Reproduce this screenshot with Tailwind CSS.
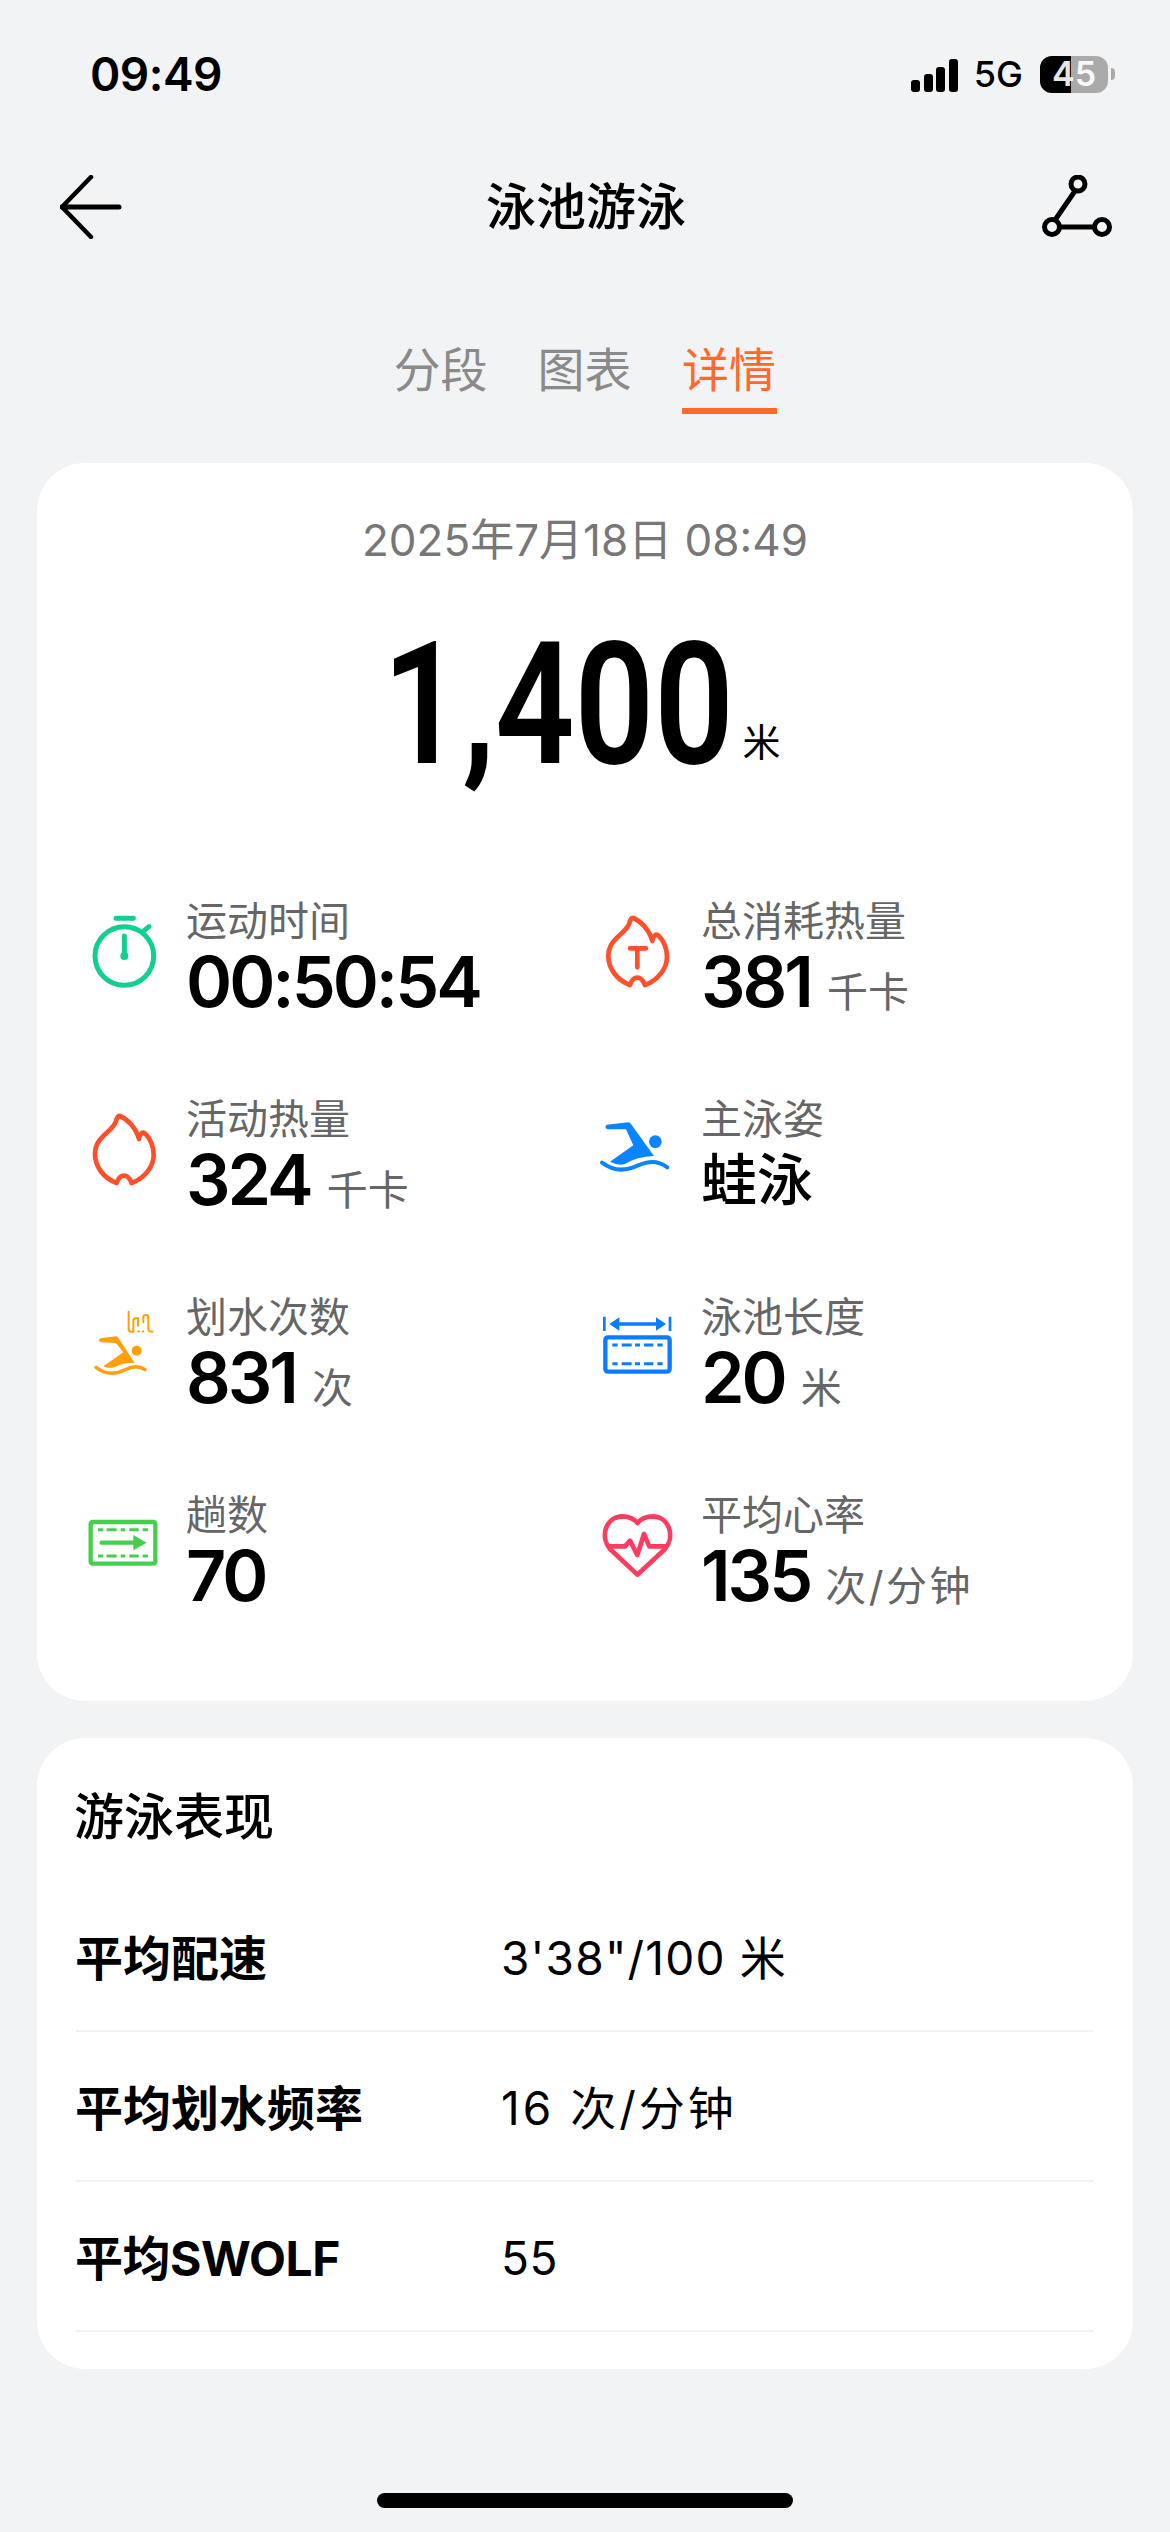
<!DOCTYPE html>
<html lang="zh-CN">
<head>
    <meta charset="UTF-8">
    <meta name="viewport" content="width=device-width, initial-scale=1.0">
    <title>泳池游泳</title>
    <script src="https://cdn.jsdelivr.net/npm/@tailwindcss/browser@4"></script>
</head>
<body class="bg-[#f2f3f5] font-['Inter','Noto_Sans_CJK_SC',sans-serif] text-black">
<div class="w-[1170px] h-[2532px] flex flex-col overflow-hidden">
    <!-- Status bar -->
    <div class="h-[148px] shrink-0 flex items-center justify-between pl-[90px] pr-[55px]">
        <span class="text-[46px] font-semibold leading-none tracking-[-0.5px]">09:49</span>
        <div class="flex items-center">
            <div class="flex items-end gap-[3.5px] h-[33px] mt-[3px]">
                <div class="w-[9px] h-[12px] bg-black rounded-[3px]"></div>
                <div class="w-[9px] h-[18px] bg-black rounded-[3px]"></div>
                <div class="w-[9px] h-[25px] bg-black rounded-[3px]"></div>
                <div class="w-[9px] h-[33px] bg-black rounded-[3px]"></div>
            </div>
            <span class="ml-[16px] text-[36px] font-medium leading-none">5G</span>
            <div class="ml-[17px] relative w-[68px] h-[37px] rounded-[12px] flex bg-[#aaaaaa]">
                <div class="w-[31px] bg-black rounded-l-[12px]"></div>
                <span class="absolute inset-0 flex items-center justify-center text-[34px] font-semibold leading-none text-white/90">45</span>
            </div>
            <div class="ml-[3px] w-[4px] h-[12px] rounded-r-full bg-[#aaaaaa]"></div>
        </div>
    </div>

    <!-- Nav -->
    <div class="h-[118px] shrink-0 flex items-center justify-between pl-[60px] pr-[56px]">
        <svg class="w-[62px] h-[64px]" viewBox="0 0 62 64" fill="none" stroke="black" stroke-width="4.5" stroke-linecap="round" stroke-linejoin="round">
            <path d="M31 2 L2 32 L31 62"/>
            <path d="M2 32 H59" stroke-width="5"/>
        </svg>
        <h1 class="ml-[8px] text-[50px] font-medium leading-none">泳池游泳</h1>
        <svg class="w-[72px] h-[64px]" viewBox="0 0 72 64" fill="none" stroke="black" stroke-width="5">
            <circle cx="36" cy="9" r="7"/>
            <circle cx="10" cy="52" r="7.5"/>
            <circle cx="60" cy="52" r="7.5"/>
            <path d="M33 16 L13 45 M17.5 52 H52.5"/>
        </svg>
    </div>

    <!-- Tabs -->
    <div class="shrink-0 pt-[74px] flex justify-center gap-[50px] text-[47px] leading-[60px] text-[#8a8a8a]">
        <span>分段</span>
        <span>图表</span>
        <div class="flex flex-col items-center">
            <span class="text-[#ff6a2b]">详情</span>
            <div class="mt-[8px] w-[95px] h-[6px] bg-[#ff6a2b]"></div>
        </div>
    </div>

    <!-- Summary card -->
    <div class="mt-[49px] mx-[37px] shrink-0 bg-white rounded-[48px] pt-[47px] pb-[13px]">
        <p class="text-center text-[44px] leading-[60px] text-[#777777]">2025年7月18日 08:49</p>
        <div class="mt-[60px] h-[150px] mb-[116px] flex justify-center items-end gap-[15px]">
            <div class="w-[338px] flex justify-center">
                <span class="font-['Roboto'] font-semibold text-[170px] leading-[150px] scale-x-[0.82] whitespace-nowrap">1,400</span>
            </div>
            <span class="text-[38px] leading-none mb-[19px]">米</span>
        </div>

        <div class="grid grid-cols-[515px_1fr] auto-rows-[198px] pl-[52px]">
            <div class="flex gap-[27px]">
                <svg class="w-[70px] h-[120px] shrink-0 overflow-visible" viewBox="87 48 210 360" fill="none" stroke="#0fd08f" stroke-width="15" stroke-linecap="round">
                    <circle cx="193" cy="228" r="88"/>
                    <path d="M168 115 H220 M193 168 V228 M252 152 L267 140"/>
                    <circle cx="193" cy="228" r="12" fill="#0fd08f" stroke="none"/>
                </svg>
                <div>
                    <p class="text-[41px] leading-[50px] text-[#666666]">运动时间</p>
                    <p class="flex items-baseline text-[70px] leading-[72px] font-semibold tracking-[-3px]">00:50:54</p>
                </div>
            </div>
            <div class="flex gap-[27px]">
                <svg class="w-[70px] h-[120px] shrink-0 overflow-visible" viewBox="72 48 210 360" fill="none" stroke="#ff4f2b" stroke-width="14" stroke-linecap="round" stroke-linejoin="round">
                    <path d="M150 315 C110 300 85 265 85 228 C85 175 135 165 148 130 C151 118 155 113 160 114 C180 122 208 148 217 183 C218 168 228 160 236 167 C250 180 261 205 261 230 C261 265 235 300 195 315 C188 298 178 293 172 293 C163 293 155 300 150 315 Z"/>
                    <path d="M150 205 H198 M172 205 V262"/>
                </svg>
                <div>
                    <p class="text-[41px] leading-[50px] text-[#666666]">总消耗热量</p>
                    <p class="flex items-baseline gap-[16px] text-[70px] leading-[72px] font-semibold tracking-[-3px]">381<span class="text-[41px] font-normal tracking-normal text-[#666666]">千卡</span></p>
                </div>
            </div>

            <div class="flex gap-[27px]">
                <svg class="w-[70px] h-[120px] shrink-0 overflow-visible" viewBox="87 12 210 360" fill="none" stroke="#ff4f2b" stroke-width="14" stroke-linecap="round" stroke-linejoin="round">
                    <path transform="translate(20 -36)" d="M150 315 C110 300 85 265 85 228 C85 175 135 165 148 130 C151 118 155 113 160 114 C180 122 208 148 217 183 C218 168 228 160 236 167 C250 180 261 205 261 230 C261 265 235 300 195 315 C188 298 178 293 172 293 C163 293 155 300 150 315 Z"/>
                </svg>
                <div>
                    <p class="text-[41px] leading-[50px] text-[#666666]">活动热量</p>
                    <p class="flex items-baseline gap-[16px] text-[70px] leading-[72px] font-semibold tracking-[-3px]">324<span class="text-[41px] font-normal tracking-normal text-[#666666]">千卡</span></p>
                </div>
            </div>
            <div class="flex gap-[27px]">
                <svg class="w-[70px] h-[120px] shrink-0 overflow-visible" viewBox="72 12 210 360" fill="#0a84ff">
                    <path d="M80 104 L145 97 Q150 97 153 102 L222 198 Q170 200 135 222 Q115 228 90 215 L160 166 L138 118 L82 118 Q72 112 80 104 Z"/>
                    <circle cx="226" cy="155" r="19"/>
                    <path d="M66 218 C95 240 125 245 160 232 C190 218 225 205 262 232" fill="none" stroke="#0a84ff" stroke-width="12" stroke-linecap="round"/>
                </svg>
                <div>
                    <p class="text-[41px] leading-[50px] text-[#666666]">主泳姿</p>
                    <p class="flex items-baseline text-[56px] leading-[72px] font-medium">蛙泳</p>
                </div>
            </div>

            <div class="flex gap-[27px]">
                <svg class="w-[70px] h-[120px] shrink-0 overflow-visible" viewBox="57 39 210 360" fill="#ff9f0a">
                    <path d="M92 178 L138 172 Q142 172 145 176 L194 252 Q160 250 135 264 Q115 270 100 262 L160 220 L138 192 L92 190 Q82 184 92 178 Z"/>
                    <circle cx="200" cy="215" r="15"/>
                    <path d="M78 265 C110 290 140 285 165 272 C185 262 205 258 225 272" fill="none" stroke="#ff9f0a" stroke-width="10" stroke-linecap="round"/>
                    <path d="M176 98 V150 Q176 158 184 158 H190 V126 Q190 118 198 118 H204 V140 M220 130 V114 Q220 108 228 108 Q235 108 235 115 V150 Q235 158 247 158" fill="none" stroke="#ff9f0a" stroke-width="6" stroke-linecap="round"/>
                    <circle cx="206" cy="157" r="3.5"/>
                    <circle cx="219" cy="157" r="3.5"/>
                </svg>
                <div>
                    <p class="text-[41px] leading-[50px] text-[#666666]">划水次数</p>
                    <p class="flex items-baseline gap-[16px] text-[70px] leading-[72px] font-semibold tracking-[-3px]">831<span class="text-[41px] font-normal tracking-normal text-[#666666]">次</span></p>
                </div>
            </div>
            <div class="flex gap-[27px]">
                <svg class="w-[70px] h-[120px] shrink-0 overflow-visible" viewBox="72 39 210 360" fill="none" stroke="#0a7cff" stroke-linecap="butt">
                    <path d="M73 113 V156 M270 113 V156" stroke-width="8"/>
                    <path d="M105 135 H240" stroke-width="11"/>
                    <path d="M88 135 L118 115 V155 Z M258 135 L228 115 V155 Z" fill="#0a7cff" stroke="none"/>
                    <rect x="76" y="175" width="193" height="103" rx="8" stroke-width="13"/>
                    <path d="M97 198 H113 M125 198 H155 M165 198 H180 M192 198 H220 M232 198 H248 M97 254 H113 M125 254 H155 M165 254 H180 M192 254 H220 M232 254 H248" stroke-width="9"/>
                </svg>
                <div>
                    <p class="text-[41px] leading-[50px] text-[#666666]">泳池长度</p>
                    <p class="flex items-baseline gap-[16px] text-[70px] leading-[72px] font-semibold tracking-[-3px]">20<span class="text-[41px] font-normal tracking-normal text-[#666666]">米</span></p>
                </div>
            </div>

            <div class="flex gap-[27px]">
                <svg class="w-[70px] h-[120px] shrink-0 overflow-visible" viewBox="57 3 210 360" fill="none" stroke="#45cf4c">
                    <rect x="62" y="99" width="194" height="125" rx="6" stroke-width="13"/>
                    <path d="M84 122 H100 M110 122 H140 M152 122 H166 M178 122 H206 M218 122 H234 M84 201 H100 M110 201 H140 M152 201 H166 M178 201 H206 M218 201 H234" stroke-width="9"/>
                    <path d="M95 161 H195" stroke-width="13" stroke-linecap="round"/>
                    <path d="M190 138 L230 161 L190 184 Z" fill="#45cf4c" stroke="none"/>
                </svg>
                <div>
                    <p class="text-[41px] leading-[50px] text-[#666666]">趟数</p>
                    <p class="flex items-baseline text-[70px] leading-[72px] font-semibold tracking-[-3px]">70</p>
                </div>
            </div>
            <div class="flex gap-[27px]">
                <svg class="w-[70px] h-[120px] shrink-0 overflow-visible" viewBox="72 3 210 360" fill="none" stroke="#ff3b60" stroke-width="14" stroke-linecap="round" stroke-linejoin="round">
                    <path d="M172 257 L90 180 C60 145 75 85 125 82 C150 82 165 92 172 102 C180 92 195 82 220 82 C270 85 285 145 255 180 Z"/>
                    <path d="M85 172 H135 L150 155 L172 198 L192 135 L208 172 H258"/>
                </svg>
                <div>
                    <p class="text-[41px] leading-[50px] text-[#666666]">平均心率</p>
                    <p class="flex items-baseline gap-[15px] text-[70px] leading-[72px] font-semibold tracking-[-3px]">135<span class="text-[41px] font-normal tracking-[2.5px] text-[#666666]">次/分钟</span></p>
                </div>
            </div>
        </div>
    </div>

    <!-- Swim performance -->
    <div class="mt-[37px] mx-[37px] shrink-0 bg-white rounded-[48px] pt-[49px] pb-[37px] px-[39px]">
        <h2 class="text-[50px] leading-[60px] font-medium -ml-[2px]">游泳表现</h2>
        <div class="mt-[35px]">
            <div class="h-[150px] pt-[5px] border-b-2 border-[#f2f2f2] flex items-center">
                <span class="w-[426px] text-[48px] font-bold -ml-[1px]">平均配速</span>
                <span class="text-[46px] tracking-[1.2px]">3'38"/100 米</span>
            </div>
            <div class="h-[150px] pt-[5px] border-b-2 border-[#f2f2f2] flex items-center">
                <span class="w-[426px] text-[48px] font-bold -ml-[1px]">平均划水频率</span>
                <span class="text-[46px] tracking-[3px]">16 次/分钟</span>
            </div>
            <div class="h-[150px] pt-[5px] border-b-2 border-[#f2f2f2] flex items-center">
                <span class="w-[426px] text-[48px] font-bold -ml-[1px] tracking-[-0.5px]">平均SWOLF</span>
                <span class="text-[46px] tracking-[0.5px]">55</span>
            </div>
        </div>
    </div>

    <!-- Home indicator -->
    <div class="mt-[124px] mx-auto w-[416px] h-[15px] shrink-0 rounded-[8px] bg-black"></div>
</div>
</body>
</html>
